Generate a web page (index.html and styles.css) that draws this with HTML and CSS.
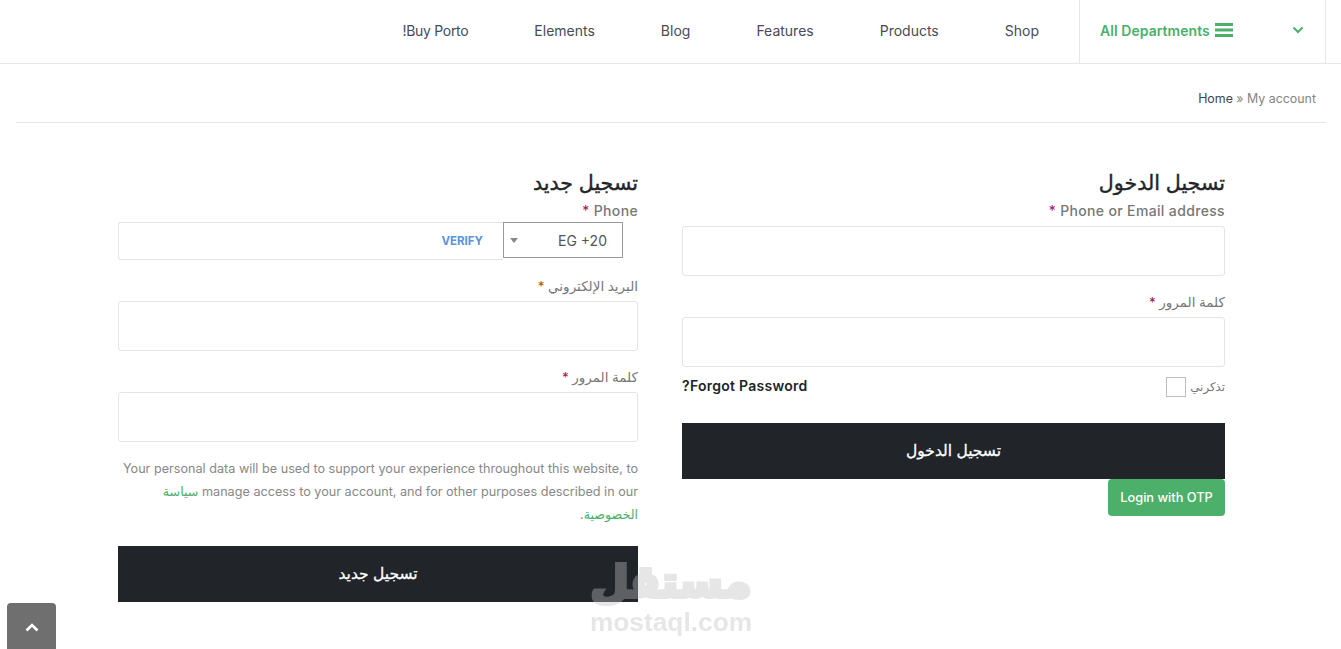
FILE: index.html
```html
<!DOCTYPE html>
<html dir="rtl" lang="ar">
	<head>
		<meta charset="UTF-8">
		<title>My account</title>
		<link rel="stylesheet" href="styles.css">
	</head>
	<body>
		<header class="topbar">
			<div class="departments">
				<svg class="chevron" width="12" height="8" viewBox="0 0 12 8"><path d="M1.500 1.500 6 6l4.500-4.500" fill="none" stroke="#4caf6a" stroke-width="2"/></svg>
				<span class="dep-title">
					<svg class="burger" width="18" height="14" viewBox="0 0 18 14"><path d="M0 0h18v3H0zM0 5.500h18v3H0zM0 11h18v3H0z" fill="#4caf6a"/></svg>
					<span>All Departments</span>
				</span>
			</div>
			<nav class="menu">
				<a href="#">Shop</a>
				<a href="#">Products</a>
				<a href="#">Features</a>
				<a href="#">Blog</a>
				<a href="#">Elements</a>
				<a href="#">Buy Porto!</a>
			</nav>
		</header>

		<div class="crumbs"><a href="#">Home</a> » My account</div>

		<main class="forms">
			<form class="login">
				<h2>تسجيل الدخول</h2>
				<label class="first latin">Phone or Email address <b>*</b></label>
				<input type="text" class="field">
				<label>كلمة المرور <b>*</b></label>
				<input type="password" class="field">
				<div class="remember">
					<span class="check-wrap">
						<span class="check-text">تذكرني</span>
						<input type="checkbox" class="check">
					</span>
					<a href="#" class="forgot">Forgot Password?</a>
				</div>
				<button type="button" class="btn-dark">تسجيل الدخول</button>
				<button type="button" class="btn-otp">Login with OTP</button>
			</form>

			<form class="register">
				<h2>تسجيل جديد</h2>
				<label class="first latin tight">Phone <b>*</b></label>
				<div class="phone-row">
					<div class="dial">
						<span dir="ltr">EG +20</span>
						<i class="caret"></i>
					</div>
					<div class="phone-box"><a href="#" class="verify">VERIFY</a></div>
				</div>
				<label>البريد الإلكتروني <b class="orange">*</b></label>
				<input type="email" class="field">
				<label>كلمة المرور <b>*</b></label>
				<input type="password" class="field">
				<p class="privacy">Your personal data will be used to support your experience throughout this website, to<br>manage access to your account, and for other purposes described in our <a href="#">سياسة<br>الخصوصية</a>.</p>
				<button type="button" class="btn-dark">تسجيل جديد</button>
			</form>
		</main>

		<a href="#" class="totop">
			<svg width="14" height="9" viewBox="0 0 14 9"><path d="M1.500 7.500 7 2l5.500 5.500" fill="none" stroke="#fff" stroke-width="2.600"/></svg>
		</a>

		<div class="watermark">
			<span class="wm-ar">مستقل</span>
			<span class="wm-en">mostaql.com</span>
		</div>
	</body>
</html>
```

FILE: styles.css
```css
*{
	box-sizing: border-box;
}
body{
	margin: 0;
	background: #fff;
	font-family: Inter, "DejaVu Sans", sans-serif;
	font-size: 14px;
	color: #777;
}
a{
	text-decoration: none;
	color: inherit;
}
.topbar{
	display: flex;
	height: 64px;
	border-bottom: 1px solid #e7e7e7;
	padding-right: 15px;
}
.departments{
	display: flex;
	align-items: center;
	justify-content: space-between;
	width: 247px;
	padding: 0 21px 3px 20px;
	border-left: 1px solid #e7e7e7;
	border-right: 1px solid #e7e7e7;
}
.dep-title{
	display: flex;
	align-items: center;
	gap: 5px;
	color: #4caf6a;
	font-weight: 600;
	font-size: 14px;
	letter-spacing: 0.05px;
}
.menu{
	display: flex;
	align-items: center;
	gap: 66px;
	padding: 0 40px 3px 0;
	font-size: 14px;
	color: #4a4a55;
}
.menu a:last-child{
	letter-spacing: -0.3px;
}
.crumbs{
	height: 59px;
	margin: 0 15px 0 16px;
	padding: 27px 10px 0 0;
	border-bottom: 1px solid #e7e7e7;
	font-size: 12.400px;
	color: #858585;
}
.crumbs a{
	color: #444;
}
.forms{
	display: grid;
	grid-template-columns: 543px 520px;
	column-gap: 44px;
	align-items: start;
	padding: 47px 116px 0 118px;
}
h2{
	margin: 0;
	height: 26px;
	line-height: 26px;
	font-size: 20.600px;
	font-weight: 400;
	-webkit-text-stroke: 0.4px #212529;
	color: #212529;
}
label{
	display: block;
	height: 20px;
	line-height: 20px;
	margin-top: 16px;
	margin-bottom: 5px;
	font-size: 13.500px;
	font-weight: 500;
	color: #777;
}
label.first{
	margin-top: 5px;
}
label.latin{
	font-size: 14px;
	letter-spacing: 0.35px;
}
label.tight{
	margin-bottom: 1px;
}
label b{
	font-weight: 400;
	color: #a02040;
}
label b.orange{
	color: #b5560f;
}
.field{
	display: block;
	width: 100%;
	height: 50px;
	border: 1px solid #e4e4e4;
	border-radius: 3px;
	background: #fff;
}
.remember{
	display: flex;
	align-items: center;
	justify-content: space-between;
	height: 20px;
	margin-top: 10px;
}
.check-wrap{
	display: flex;
	align-items: center;
	gap: 4px;
}
.check-text{
	font-size: 11.800px;
	color: #777;
}
.check{
	appearance: none;
	width: 20px;
	height: 20px;
	margin: 0;
	border: 1px solid #bdbdbd;
	background: #fff;
}
.forgot{
	font-size: 14px;
	font-weight: 600;
	letter-spacing: 0.27px;
	color: #212529;
	margin-bottom: 3px;
}
.btn-dark{
	display: block;
	width: 100%;
	height: 56px;
	padding-bottom: 3px;
	border: 0;
	background: #212529;
	color: #fff;
	font-family: inherit;
	font-size: 15.500px;
	font-weight: 400;
	-webkit-text-stroke: 0.3px #fff;
}
.login .btn-dark{
	margin-top: 26px;
}
.btn-otp{
	display: block;
	width: 117px;
	height: 37px;
	padding: 0;
	border: 0;
	border-radius: 4px;
	background: #4caf6a;
	color: #fff;
	font-family: inherit;
	font-size: 12.800px;
	font-weight: 500;
}
.phone-row{
	display: flex;
	margin-right: 15px;
	align-items: flex-start;
}
.dial{
	display: flex;
	align-items: center;
	justify-content: space-between;
	width: 120px;
	height: 36px;
	padding: 0 15px 0 6px;
	border: 1px solid #999;
	color: #555;
	font-size: 14px;
}
.caret{
	width: 0;
	height: 0;
	border-top: 5px solid #888;
	border-left: 4px solid transparent;
	border-right: 4px solid transparent;
}
.phone-box{
	flex: 1;
	height: 38px;
	padding: 0 20px 1px 0;
	display: flex;
	align-items: center;
	border: 1px solid #e4e4e4;
	border-right: 0;
	border-radius: 3px 0 0 3px;
}
.verify{
	color: #5b93de;
	font-size: 11.500px;
	font-weight: 700;
}
.privacy{
	margin: 15px 0 20px;
	font-size: 12.650px;
	line-height: 23px;
	color: #888;
}
.privacy a{
	color: #4caf6a;
}
.totop{
	position: fixed;
	left: 7px;
	bottom: 0;
	width: 49px;
	height: 46px;
	padding-top: 20px;
	display: flex;
	justify-content: center;
	align-items: flex-start;
	border-radius: 4px 4px 0 0;
	background: #6f6f6f;
}
.watermark{
	position: fixed;
	left: 590px;
	top: 556px;
	width: 162px;
	display: flex;
	flex-direction: column;
	align-items: center;
	color: #bfbfbf;
	opacity: .39;
	font-family: "Liberation Sans", "DejaVu Sans", sans-serif;
	font-weight: 700;
	pointer-events: none;
}
.wm-ar{
	height: 52px;
	line-height: 52px;
	font-family: "DejaVu Sans", sans-serif;
	font-size: 44px;
	-webkit-text-stroke: 4px #bfbfbf;
}
.wm-en{
	line-height: 28px;
	font-size: 26.300px;
}
```
